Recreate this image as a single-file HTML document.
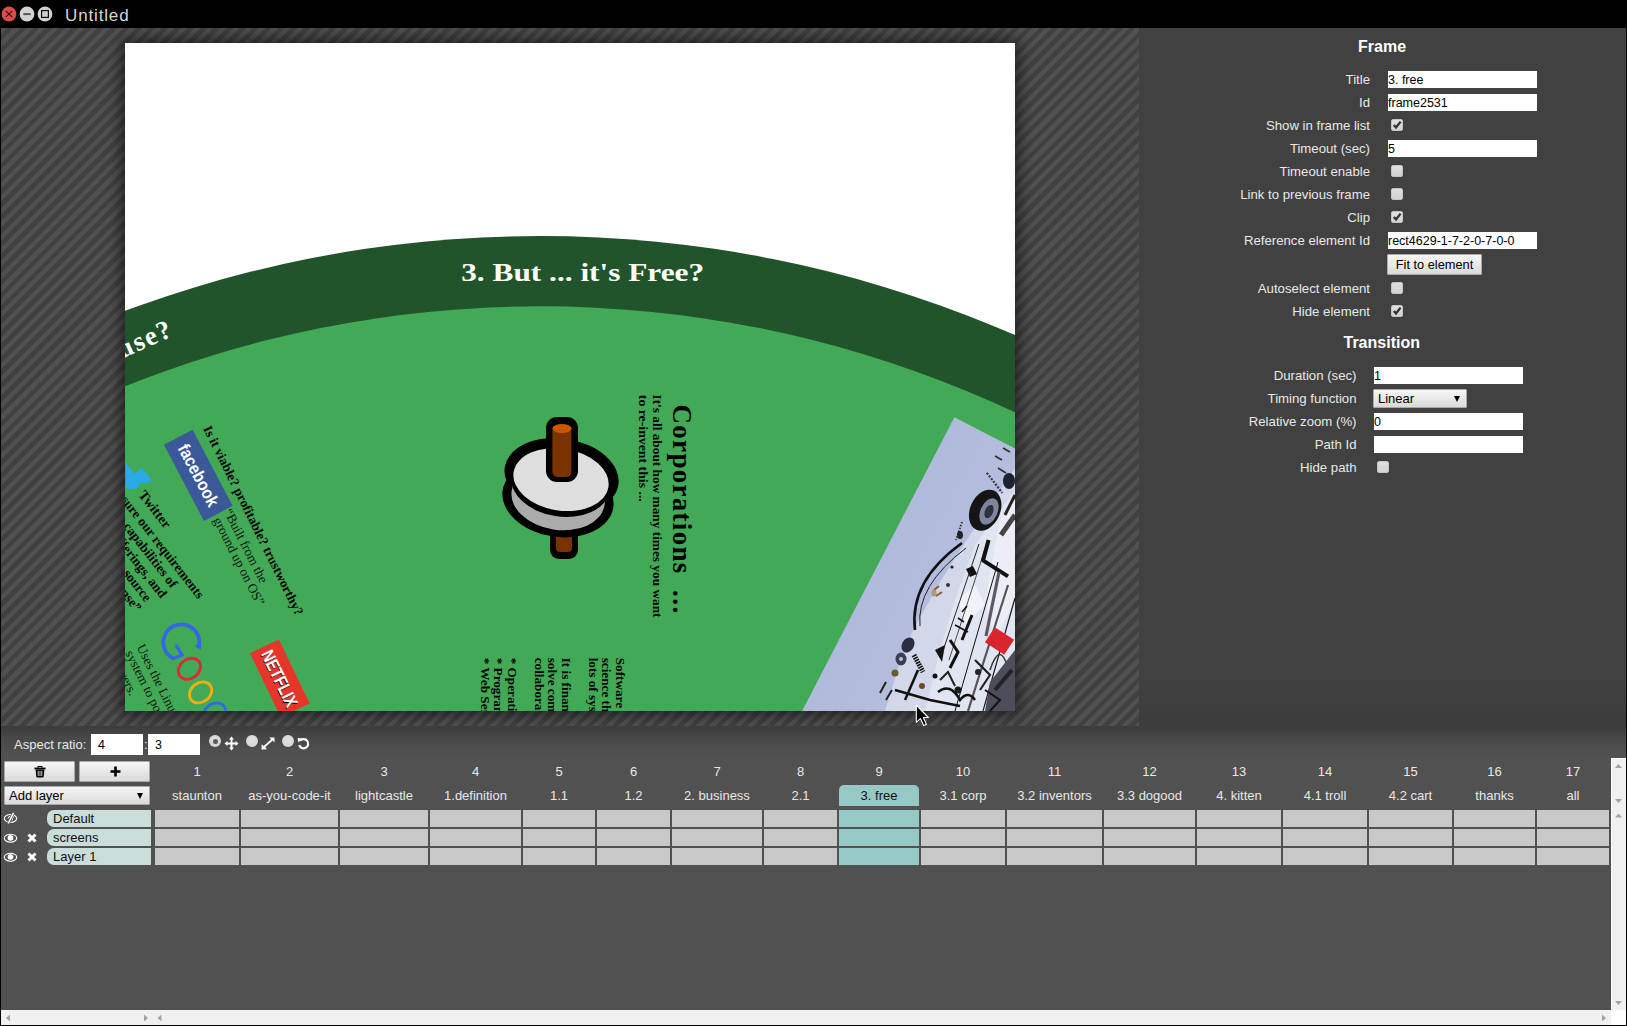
<!DOCTYPE html>
<html><head><meta charset="utf-8">
<style>
*{box-sizing:border-box;margin:0;padding:0}
html,body{width:1627px;height:1026px;overflow:hidden;background:#000;font-family:"Liberation Sans",sans-serif}
.abs{position:absolute}
#titlebar{left:0;top:0;width:1627px;height:28px;background:#000}
.wbtn{position:absolute;top:7px;width:15px;height:15px;border-radius:50%;background:#d4d4d4}
#ttl{position:absolute;left:65px;top:5.5px;font-size:17px;color:#d6d6d6;letter-spacing:0.85px}
#stage{left:1px;top:28px;width:1138px;height:698px;overflow:hidden;
 background:repeating-linear-gradient(135deg,#505050 0,#505050 4.4px,#414141 4.4px,#414141 9.12px)}
#canvas{left:124px;top:15px;width:890px;height:668px;background:#fff;overflow:hidden;box-shadow:0 0 14px 4px rgba(0,0,0,0.55)}
#panel{left:1139px;top:28px;width:487px;height:698px;background:linear-gradient(#414141 0,#414141 650px,#3c3c3c 698px);color:#e6e6e6}
#bottom{left:1px;top:726px;width:1625px;height:284px;background:linear-gradient(#3c3c3c 0,#474747 11px,#4f4f4f 24px,#515151 34px,#515151 100%)}
#hscroll{left:1px;top:1010px;width:1610px;height:15px;background:#f0f0f0}
#vscroll{left:1611px;top:758px;width:15px;height:252px;background:#f0f0f0;border-left:1px solid #fff;border-top:1px solid #fff}
#corner{left:1611px;top:1010px;width:15px;height:15px;background:#fff}
.lbl{position:absolute;font-size:13.2px;line-height:17px;color:#e8e8e8;text-align:right;white-space:nowrap}
.inp{position:absolute;height:17px;width:149px;background:#fff;color:#000;font-size:12.5px;line-height:19px;padding-left:0px;white-space:nowrap;overflow:hidden}
.chk{position:absolute;width:12px;height:12px;border-radius:2px;background:linear-gradient(#e0e0e0,#d2d2d2);border:1px solid #c4c4c4}
.tick{position:absolute;left:0px;top:0px}
.btn{position:absolute;background:linear-gradient(#f6f6f6,#dadada);border:1px solid #a9a9a9;border-radius:1px;color:#000;font-size:12.8px;line-height:19.5px;text-align:center;white-space:nowrap}
.sel{text-align:left;padding-left:4px;line-height:18.5px;font-size:13px}
.arr{position:absolute;right:6px;top:6px;width:0;height:0;border-left:3.5px solid transparent;border-right:3.5px solid transparent;border-top:6px solid #000}
.tl{position:absolute;font-size:13px;line-height:17px;color:#e8e8e8;white-space:nowrap}
.ainp{position:absolute;width:52px;height:21px;background:#fff;color:#000;font-size:12.5px;line-height:23px;padding-left:7px}
.radio{position:absolute;width:12px;height:12px;border-radius:50%;background:radial-gradient(circle at 50% 40%,#e2e2e2,#cfcfcf)}
.rdot{position:absolute;left:3.5px;top:3.5px;width:5px;height:5px;border-radius:50%;background:#5a5a5a}
.pill{position:absolute;left:47px;width:104px;height:17px;background:#c9dddb;border-radius:7px 0 0 7px;color:#111;font-size:13px;line-height:17px;padding-left:6px}
.gh{position:absolute;text-align:center;font-size:13px;line-height:17px;color:#e8e8e8;white-space:nowrap}
.gt{position:absolute;text-align:center;font-size:13px;line-height:17px;color:#e8e8e8;white-space:nowrap}
.tab{background:#96c8c6;color:#111;height:21px;line-height:21px;border-radius:5px 5px 0 0}
.cell{position:absolute;height:17px;background:#c8c8c8}
.csel{background:#96c8c6}
.hdr{position:absolute;font-size:16px;font-weight:bold;color:#fff}
</style></head><body>
<div id="titlebar" class="abs">
  <svg class="abs" style="left:0;top:0" width="60" height="28" viewBox="0 0 60 28">
    <circle cx="9" cy="14" r="7.4" fill="#df4a4a"/>
    <path d="M5.8 10.8 L12.2 17.2 M12.2 10.8 L5.8 17.2" stroke="#1a1a1a" stroke-width="1.1"/>
    <circle cx="27" cy="14" r="7.4" fill="#d2d2d2"/>
    <rect x="23.3" y="13.1" width="7.4" height="2" fill="#555"/>
    <circle cx="45" cy="14" r="7.4" fill="#d2d2d2"/>
    <rect x="41.6" y="10.6" width="6.8" height="6.8" fill="none" stroke="#111" stroke-width="1.2"/>
  </svg>
  <div id="ttl">Untitled</div>
</div>
<div id="stage" class="abs">
  <div id="canvas" class="abs">
<svg width="890" height="668" viewBox="125 43 890 668" style="position:absolute;left:0;top:0;font-family:'Liberation Serif',serif">
  <defs>
    <linearGradient id="pg" x1="0" y1="0" x2="1" y2="0">
      <stop offset="0" stop-color="#b0badb"/><stop offset="0.5" stop-color="#bcc3e0"/><stop offset="1" stop-color="#cfd3e8"/>
    </linearGradient>
  </defs>
  <circle cx="540" cy="1424" r="1188" fill="#21542a"/>
  <circle cx="540" cy="1424" r="1117.7" fill="#42aa56"/>
  <text x="582.7" y="281.4" text-anchor="middle" font-size="25.2" font-weight="bold" fill="#fff" textLength="243" lengthAdjust="spacingAndGlyphs">3. But ... it's Free?</text>
  <text transform="translate(175,335) rotate(-24)" text-anchor="end" letter-spacing="1.8" font-size="27" font-weight="bold" fill="#fff">Excuse?</text>
  <!-- wheel -->
  <g>
    <rect x="550" y="515" width="28" height="44" rx="9" fill="#000"/>
    <rect x="556" y="528" width="16" height="24" rx="4" fill="#7a3300"/>
    <g transform="rotate(9 560 486)">
    <ellipse cx="560" cy="476" rx="57.5" ry="37.5" fill="#000"/>
    <ellipse cx="560" cy="499" rx="56" ry="38" fill="#000"/>
    <ellipse cx="560" cy="498" rx="47" ry="32" fill="#ababab"/>
    <ellipse cx="560" cy="483.5" rx="49.5" ry="33" fill="#000"/>
    <ellipse cx="560" cy="479.5" rx="48" ry="31" fill="#dedede"/>
    </g>
    <rect x="546" y="417" width="32" height="65" rx="11" fill="#000"/>
    <rect x="552.4" y="425" width="19" height="52" rx="5" fill="#7a3300"/>
    <ellipse cx="562" cy="428.5" rx="9.5" ry="4.6" fill="#cc5500"/>
  </g>
  <!-- corporations -->
  <g font-weight="bold" fill="#000">
    <text transform="translate(672.5,404.5) rotate(90)" font-size="27" letter-spacing="1.3">Corporations</text><text transform="translate(672.5,590) rotate(90)" font-size="27" letter-spacing="1.5">...</text>
    <text transform="translate(653.2,394.5) rotate(90)" font-size="11.8" textLength="223" lengthAdjust="spacingAndGlyphs">It's all about how many times you want</text>
    <text transform="translate(639.3,394.8) rotate(90)" font-size="11.8" textLength="107" lengthAdjust="spacingAndGlyphs">to re-invent this ...</text>
  </g>
  <g font-weight="bold" fill="#000" font-size="13.2">
    <text transform="translate(615.8,657.7) rotate(90)">Software engineering is a</text>
    <text transform="translate(602.3,657.7) rotate(90)">science that requires</text>
    <text transform="translate(588.8,657.7) rotate(90)">lots of systems</text>
    <text transform="translate(561.8,657.7) rotate(90)">It is financially hard to</text>
    <text transform="translate(548.3,657.7) rotate(90)">solve complex</text>
    <text transform="translate(534.8,657.7) rotate(90)">collaboration</text>
    <text transform="translate(507.8,657.7) rotate(90)">* Operating Systems</text>
    <text transform="translate(494.3,657.7) rotate(90)">* Programming</text>
    <text transform="translate(480.8,657.7) rotate(90)">* Web Servers</text>
  </g>
  <!-- photo -->
  <g transform="translate(954.4,417.2) rotate(27.4)">
    <rect x="0" y="0" width="420" height="520" fill="url(#pg)"/>
  </g>
  <g id="parts">
    <path d="M968 538 L1015 468 L1015 711 L885 711 L900 662 L914 628 L940 582 Z" fill="#d3d7ea"/>
    <path d="M975 545 L1015 490 L1015 711 L925 711 L940 650 L955 600 Z" fill="#e1e4f1"/>
    <path d="M1000 520 L1015 500 L1015 600 L995 640 L985 600 Z" fill="#eceef7"/>
    <path d="M958 600 L975 585 L985 605 L965 625 Z" fill="#f2f3f9"/>
    <ellipse cx="985.2" cy="510.2" rx="15" ry="21.5" transform="rotate(24 985.2 510.2)" fill="#151515"/>
    <ellipse cx="989" cy="511.5" rx="8.5" ry="14" transform="rotate(24 989 511.5)" fill="#7d849c"/>
    <ellipse cx="989" cy="511.5" rx="4" ry="7" transform="rotate(24 989 511.5)" fill="#2c3040"/>
    <path d="M986.8 472.8 L1002.4 493" stroke="#333" stroke-width="2.2" stroke-dasharray="2 1.5"/>
    <ellipse cx="1009" cy="481" rx="6" ry="8" fill="#1e2230"/>
    <path d="M995 456 L1002 460 M998 468 L1006 473 M1003 448 L1010 452" stroke="#333" stroke-width="2"/>
    <path d="M962 522 L956 540" stroke="#333" stroke-width="2" stroke-dasharray="1.5 1.5"/>
    <ellipse cx="960" cy="535" rx="3" ry="4" fill="#222"/>
    <path d="M1005 515 L1015 495" stroke="#222" stroke-width="3"/>
    <path d="M1001 535 L1015 515" stroke="#444" stroke-width="5"/>
    <path d="M962 543 Q909 581 915 630" stroke="#111" stroke-width="2.6" fill="none"/>
    <path d="M966 548 Q916 586 920 626" stroke="#222" stroke-width="1" fill="none"/>
    <path d="M979 544 L943.6 649" stroke="#111" stroke-width="0.9"/>
    <path d="M985 549 L949 660" stroke="#222" stroke-width="0.8"/>
    <path d="M998 562 L955 711" stroke="#111" stroke-width="1"/>
    <path d="M1008 585 L968 711" stroke="#555" stroke-width="2.2"/>
    <path d="M1015 598 L983 711" stroke="#1a1a1a" stroke-width="1.2"/>
    <path d="M988.6 540 L983 560.4 L1008 576.4" stroke="#111" stroke-width="4" fill="none" stroke-linejoin="round"/>
    <path d="M986 636 L999 572" stroke="#5a5a64" stroke-width="3.2"/>
    <path d="M966 569 L973 566 L977 574 L970 577 Z" fill="#111"/>
    <path d="M962 612 L967 606 M958 618 L964 622 M955 625 L968 632" stroke="#111" stroke-width="1.6"/>
    <path d="M972 615 L962 640" stroke="#111" stroke-width="3"/>
    <circle cx="948" cy="585" r="2" fill="#333"/><circle cx="952" cy="567" r="1.6" fill="#222"/>
    <path d="M934 590 L939 586 M936 596 L942 592" stroke="#8a5a30" stroke-width="2"/>
    <ellipse cx="934" cy="593" rx="2.5" ry="3.5" fill="#b09a70"/>
    <path d="M1008 668 Q1000 640 990 670" stroke="#333" stroke-width="1.5" fill="none"/>
    <rect x="988" y="632" width="23" height="18" fill="#d9262e" transform="rotate(33 999.5 641)"/>
    <path d="M1015 650 L1015 711 L985 711 L990 682 Z" fill="#4c4e5c"/>
    <path d="M995 690 L1012 670" stroke="#222" stroke-width="4"/>
    <ellipse cx="908" cy="645" rx="6" ry="8" transform="rotate(30 908 645)" fill="#2a2e40"/>
    <ellipse cx="901" cy="659" rx="5.5" ry="6.5" fill="#3a3e54"/>
    <circle cx="901" cy="659" r="2" fill="#bcc0d8"/>
    <path d="M914 655 L923 672" stroke="#111" stroke-width="5" stroke-dasharray="1.6 1"/>
    <path d="M918 670 L905 700" stroke="#111" stroke-width="2.5"/>
    <circle cx="895" cy="673" r="3.5" fill="#6a5a30"/>
    <circle cx="922" cy="686" r="3" fill="#6b4a2a"/>
    <path d="M935 650 L945 645 L942 662 Z" fill="#151515"/>
    <path d="M950 640 L958 652 L950 668" stroke="#111" stroke-width="3" fill="none"/>
    <path d="M940 680 L948 672 L955 686" stroke="#222" stroke-width="2" fill="none"/>
    <path d="M895 690 L930 700 L960 706" stroke="#111" stroke-width="2.5" fill="none"/>
    <path d="M938 692 Q950 682 960 700 Q968 690 975 700" stroke="#111" stroke-width="2.5" fill="none"/>
    <path d="M880 693 L886 682 M886 700 L892 690" stroke="#222" stroke-width="2"/>
    <path d="M975 660 L990 675 L980 690" stroke="#222" stroke-width="2.2" fill="none"/>
    <circle cx="935" cy="676" r="2.5" fill="#111"/>
    <circle cx="978" cy="672" r="3" fill="#222"/>
    <circle cx="958" cy="690" r="3.5" fill="#1a1a1a"/>
    <path d="M985 690 L1000 700 L990 711" stroke="#111" stroke-width="2" fill="none"/>
  </g>
  <!-- left group -->
  <g transform="translate(192.6,429.7) rotate(62.27)">
    <rect width="86" height="32.4" fill="#3b5998"/>
    <text x="9" y="22" font-family="Liberation Sans" font-weight="bold" font-size="17.5" fill="#fff" textLength="68" lengthAdjust="spacingAndGlyphs">facebook</text>
  </g>
  <path d="M126 462 Q130 470 136 474 Q140 466 144 470 Q148 474 152 481 Q146 484 141 483 Q136 492 126 488 Z" fill="#29a9e6"/>
  <g font-weight="bold" fill="#000" font-size="13.3">
    <text transform="translate(138,495) rotate(52)" font-size="13.8">Twitter</text>
    <g transform="translate(198,599.5) rotate(52)" text-anchor="end">
      <text x="0" y="0">“We measure our requirements</text>
      <text x="-25" y="14.5">on the capabilities of</text>
      <text x="-23.5" y="29">the offerings, and</text>
      <text x="-30" y="43.5">open source</text>
      <text x="-28" y="57.5">license”</text>
    </g>
    <text transform="translate(203,428.5) rotate(63.7)">Is it viable?  profitable?  trustworthy?</text>
  </g>
  <g fill="#0d160d" font-size="13.3">
    <text transform="translate(223.5,511.5) rotate(63)">“Built from the</text>
    <text transform="translate(213,520) rotate(63)">ground up on OS”</text>
    <text transform="translate(136.5,647) rotate(63.5)">Uses the Linux operating</text>
    <text transform="translate(125,653) rotate(63.5)">system to power</text>
    <text transform="translate(104.5,645.5) rotate(63.5)">its servers.</text>
  </g>
  <!-- google -->
  <g fill="none">
    <path d="M198.5 648 A18 18 0 1 0 173.5 658.6" stroke="#3567e8" stroke-width="3.8"/>
    <path d="M195 646 L200.5 640 L201 650 Z" fill="#3567e8"/>
    <path d="M172 659 L182 655 L176 645" stroke="#3567e8" stroke-width="3.4" stroke-linejoin="miter"/>
    <ellipse cx="189.4" cy="668.8" rx="12" ry="9.6" transform="rotate(-38 189.4 668.8)" stroke="#e3263a" stroke-width="2.8"/>
    <ellipse cx="200.6" cy="692.4" rx="12" ry="9.6" transform="rotate(-38 200.6 692.4)" stroke="#f7ae10" stroke-width="2.8"/>
    <ellipse cx="214.5" cy="713.5" rx="12" ry="9.6" transform="rotate(-38 214.5 713.5)" stroke="#3567e8" stroke-width="2.8"/>
  </g>
  <g transform="translate(278.9,639.4) rotate(64.4)">
    <rect width="71" height="32" fill="#e8352a"/>
    <text x="5.5" y="23.5" font-family="Liberation Sans" font-weight="bold" font-size="18" fill="#000" textLength="61" lengthAdjust="spacingAndGlyphs">NETFLIX</text><text x="5" y="22.5" font-family="Liberation Sans" font-weight="bold" font-size="18" fill="#fff" textLength="61" lengthAdjust="spacingAndGlyphs">NETFLIX</text>
  </g>
</svg>

  </div>
</div>
<div id="panel" class="abs"></div>
<div id="panelc">
<div class="hdr" style="left:1358px;top:37.7px">Frame</div>
<div class="lbl" style="right:257px;top:71.0px">Title</div>
<div class="inp" style="left:1388px;top:71.0px">3. free</div>
<div class="lbl" style="right:257px;top:94.0px">Id</div>
<div class="inp" style="left:1388px;top:94.0px">frame2531</div>
<div class="lbl" style="right:257px;top:116.5px">Show in frame list</div>
<div class="chk" style="left:1391px;top:119.0px"><svg class="tick" width="10" height="10" viewBox="0 0 10 10"><path d="M1.8 5 L4 7.4 L8.6 1.6" stroke="#333" stroke-width="2.3" fill="none"/></svg></div>
<div class="lbl" style="right:257px;top:140.0px">Timeout (sec)</div>
<div class="inp" style="left:1388px;top:140.0px">5</div>
<div class="lbl" style="right:257px;top:162.5px">Timeout enable</div>
<div class="chk" style="left:1391px;top:165.0px"></div>
<div class="lbl" style="right:257px;top:185.5px">Link to previous frame</div>
<div class="chk" style="left:1391px;top:188.0px"></div>
<div class="lbl" style="right:257px;top:208.5px">Clip</div>
<div class="chk" style="left:1391px;top:211.0px"><svg class="tick" width="10" height="10" viewBox="0 0 10 10"><path d="M1.8 5 L4 7.4 L8.6 1.6" stroke="#333" stroke-width="2.3" fill="none"/></svg></div>
<div class="lbl" style="right:257px;top:232.0px">Reference element Id</div>
<div class="inp" style="left:1388px;top:232.0px">rect4629-1-7-2-0-7-0-0</div>
<div class="btn" style="left:1387px;top:254.0px;width:95px;height:21px">Fit to element</div>
<div class="lbl" style="right:257px;top:279.5px">Autoselect element</div>
<div class="chk" style="left:1391px;top:282.0px"></div>
<div class="lbl" style="right:257px;top:302.5px">Hide element</div>
<div class="chk" style="left:1391px;top:305.0px"><svg class="tick" width="10" height="10" viewBox="0 0 10 10"><path d="M1.8 5 L4 7.4 L8.6 1.6" stroke="#333" stroke-width="2.3" fill="none"/></svg></div>
<div class="hdr" style="left:1343.5px;top:333.9px">Transition</div>
<div class="lbl" style="right:270.5px;top:367.0px">Duration (sec)</div>
<div class="inp" style="left:1374px;top:367.0px">1</div>
<div class="lbl" style="right:270.5px;top:390.0px">Timing function</div>
<div class="btn sel" style="left:1373px;top:389.0px;width:94px;height:19px">Linear<span class="arr"></span></div>
<div class="lbl" style="right:270.5px;top:413.0px">Relative zoom (%)</div>
<div class="inp" style="left:1374px;top:413.0px">0</div>
<div class="lbl" style="right:270.5px;top:436.0px">Path Id</div>
<div class="inp" style="left:1374px;top:436.0px"></div>
<div class="lbl" style="right:270.5px;top:458.5px">Hide path</div>
<div class="chk" style="left:1377px;top:461.0px"></div>
</div>
<div id="bottom" class="abs"></div>
<div id="bottomc">
<div class="tl" style="left:14px;top:736px">Aspect ratio:</div>
<div class="ainp" style="left:91px;top:734px">4</div>
<div class="tl" style="left:144px;top:736px">:</div>
<div class="ainp" style="left:148px;top:734px">3</div>
<div class="radio" style="left:209px;top:735px"><div class="rdot"></div></div>
<svg class="abs" style="left:224px;top:736px" width="15" height="15" viewBox="0 0 15 15"><path d="M7.5 0.5 L10 3.5 H8.5 V6.5 H11.5 V5 L14.5 7.5 L11.5 10 V8.5 H8.5 V11.5 H10 L7.5 14.5 L5 11.5 H6.5 V8.5 H3.5 V10 L0.5 7.5 L3.5 5 V6.5 H6.5 V3.5 H5 Z" fill="#fff"/></svg>
<div class="radio" style="left:246px;top:735px"></div>
<svg class="abs" style="left:261px;top:737px" width="14" height="13" viewBox="0 0 14 13"><path d="M13.5 0.5 L13.5 5.5 L11.6 3.6 L4.2 10.2 L6 12.3 L0.5 12.5 L0.7 7.2 L2.6 9 L10 2.4 L8.4 0.6 Z" fill="#fff"/></svg>
<div class="radio" style="left:282px;top:735px"></div>
<svg class="abs" style="left:297px;top:737px" width="13" height="13" viewBox="0 0 13 13"><path d="M3.2 3.6 A4.6 4.6 0 1 1 2.2 8.2" stroke="#fff" stroke-width="2.1" fill="none"/><path d="M0.6 1 L5.4 1.4 L1.4 5.6 Z" fill="#fff"/></svg>
<div class="btn" style="left:4px;top:761px;width:71px;height:21px"><svg style="position:absolute;left:29px;top:4px" width="12" height="12" viewBox="0 0 12 12"><path d="M3.8 1.6 Q3.8 0.4 5 0.4 H7 Q8.2 0.4 8.2 1.6" stroke="#000" stroke-width="1.2" fill="none"/><rect x="0.5" y="1.6" width="11" height="1.8" fill="#000"/><path d="M1.6 3.4 H10.4 L9.8 10.6 Q9.7 11.6 8.7 11.6 H3.3 Q2.3 11.6 2.2 10.6 Z" fill="#000"/><path d="M4.2 4.8 V10 M6 4.8 V10 M7.8 4.8 V10" stroke="#e0e0e0" stroke-width="0.9"/></svg></div>
<div class="btn" style="left:79px;top:761px;width:71px;height:21px"><svg style="position:absolute;left:30px;top:4px" width="11" height="11" viewBox="0 0 11 11"><path d="M5.5 0.5 V10.5 M0.5 5.5 H10.5" stroke="#000" stroke-width="2.6"/></svg></div>
<div class="btn sel" style="left:4px;top:786px;width:146px;height:19px;font-size:13px;padding-left:4px;line-height:18px">Add layer<span class="arr" style="right:6px;top:6px"></span></div>
<svg class="abs" style="left:3px;top:812px" width="16" height="13" viewBox="0 0 16 13"><ellipse cx="7.5" cy="6.5" rx="6.2" ry="4" stroke="#fff" stroke-width="1.1" fill="none"/><path d="M5 6.5 Q5.5 4 8 4" stroke="#fff" stroke-width="1" fill="none"/><path d="M11 2.5 Q10 6 8.8 8.5" stroke="#fff" stroke-width="1" fill="none"/><path d="M10.5 0.8 L5.2 11.5" stroke="#515151" stroke-width="3"/><path d="M10.5 0.8 L5.2 11.5" stroke="#fff" stroke-width="1.6"/></svg>
<svg class="abs" style="left:3px;top:832px" width="16" height="13" viewBox="0 0 16 13"><ellipse cx="7.5" cy="6.2" rx="6.2" ry="4" stroke="#fff" stroke-width="1.1" fill="none"/><circle cx="7.5" cy="5.8" r="2.9" fill="#fff"/></svg>
<svg class="abs" style="left:3px;top:851px" width="16" height="13" viewBox="0 0 16 13"><ellipse cx="7.5" cy="6.2" rx="6.2" ry="4" stroke="#fff" stroke-width="1.1" fill="none"/><circle cx="7.5" cy="5.8" r="2.9" fill="#fff"/></svg>
<svg class="abs" style="left:27px;top:833px" width="10" height="10" viewBox="0 0 10 10"><path d="M1.5 1.5 L8.5 8.5 M8.5 1.5 L1.5 8.5" stroke="#fff" stroke-width="3"/></svg>
<svg class="abs" style="left:27px;top:852px" width="10" height="10" viewBox="0 0 10 10"><path d="M1.5 1.5 L8.5 8.5 M8.5 1.5 L1.5 8.5" stroke="#fff" stroke-width="3"/></svg>
<div class="pill" style="top:810px">Default</div>
<div class="pill" style="top:829px">screens</div>
<div class="pill" style="top:848px">Layer 1</div>
<div class="gh" style="left:155px;top:763px;width:84px">1</div>
<div class="gt" style="left:155px;top:787px;width:84px">staunton</div>
<div class="cell" style="left:155px;top:810px;width:84px"></div>
<div class="cell" style="left:155px;top:829px;width:84px"></div>
<div class="cell" style="left:155px;top:848px;width:84px"></div>
<div class="gh" style="left:241px;top:763px;width:97px">2</div>
<div class="gt" style="left:241px;top:787px;width:97px">as-you-code-it</div>
<div class="cell" style="left:241px;top:810px;width:97px"></div>
<div class="cell" style="left:241px;top:829px;width:97px"></div>
<div class="cell" style="left:241px;top:848px;width:97px"></div>
<div class="gh" style="left:340px;top:763px;width:88px">3</div>
<div class="gt" style="left:340px;top:787px;width:88px">lightcastle</div>
<div class="cell" style="left:340px;top:810px;width:88px"></div>
<div class="cell" style="left:340px;top:829px;width:88px"></div>
<div class="cell" style="left:340px;top:848px;width:88px"></div>
<div class="gh" style="left:430px;top:763px;width:91px">4</div>
<div class="gt" style="left:430px;top:787px;width:91px">1.definition</div>
<div class="cell" style="left:430px;top:810px;width:91px"></div>
<div class="cell" style="left:430px;top:829px;width:91px"></div>
<div class="cell" style="left:430px;top:848px;width:91px"></div>
<div class="gh" style="left:523px;top:763px;width:72px">5</div>
<div class="gt" style="left:523px;top:787px;width:72px">1.1</div>
<div class="cell" style="left:523px;top:810px;width:72px"></div>
<div class="cell" style="left:523px;top:829px;width:72px"></div>
<div class="cell" style="left:523px;top:848px;width:72px"></div>
<div class="gh" style="left:597px;top:763px;width:73px">6</div>
<div class="gt" style="left:597px;top:787px;width:73px">1.2</div>
<div class="cell" style="left:597px;top:810px;width:73px"></div>
<div class="cell" style="left:597px;top:829px;width:73px"></div>
<div class="cell" style="left:597px;top:848px;width:73px"></div>
<div class="gh" style="left:672px;top:763px;width:90px">7</div>
<div class="gt" style="left:672px;top:787px;width:90px">2. business</div>
<div class="cell" style="left:672px;top:810px;width:90px"></div>
<div class="cell" style="left:672px;top:829px;width:90px"></div>
<div class="cell" style="left:672px;top:848px;width:90px"></div>
<div class="gh" style="left:764px;top:763px;width:73px">8</div>
<div class="gt" style="left:764px;top:787px;width:73px">2.1</div>
<div class="cell" style="left:764px;top:810px;width:73px"></div>
<div class="cell" style="left:764px;top:829px;width:73px"></div>
<div class="cell" style="left:764px;top:848px;width:73px"></div>
<div class="gh" style="left:839px;top:763px;width:80px">9</div>
<div class="gt tab" style="left:839px;top:785px;width:80px">3. free</div>
<div class="cell csel" style="left:839px;top:810px;width:80px"></div>
<div class="cell csel" style="left:839px;top:829px;width:80px"></div>
<div class="cell csel" style="left:839px;top:848px;width:80px"></div>
<div class="gh" style="left:921px;top:763px;width:84px">10</div>
<div class="gt" style="left:921px;top:787px;width:84px">3.1 corp</div>
<div class="cell" style="left:921px;top:810px;width:84px"></div>
<div class="cell" style="left:921px;top:829px;width:84px"></div>
<div class="cell" style="left:921px;top:848px;width:84px"></div>
<div class="gh" style="left:1007px;top:763px;width:95px">11</div>
<div class="gt" style="left:1007px;top:787px;width:95px">3.2 inventors</div>
<div class="cell" style="left:1007px;top:810px;width:95px"></div>
<div class="cell" style="left:1007px;top:829px;width:95px"></div>
<div class="cell" style="left:1007px;top:848px;width:95px"></div>
<div class="gh" style="left:1104px;top:763px;width:91px">12</div>
<div class="gt" style="left:1104px;top:787px;width:91px">3.3 dogood</div>
<div class="cell" style="left:1104px;top:810px;width:91px"></div>
<div class="cell" style="left:1104px;top:829px;width:91px"></div>
<div class="cell" style="left:1104px;top:848px;width:91px"></div>
<div class="gh" style="left:1197px;top:763px;width:84px">13</div>
<div class="gt" style="left:1197px;top:787px;width:84px">4. kitten</div>
<div class="cell" style="left:1197px;top:810px;width:84px"></div>
<div class="cell" style="left:1197px;top:829px;width:84px"></div>
<div class="cell" style="left:1197px;top:848px;width:84px"></div>
<div class="gh" style="left:1283px;top:763px;width:84px">14</div>
<div class="gt" style="left:1283px;top:787px;width:84px">4.1 troll</div>
<div class="cell" style="left:1283px;top:810px;width:84px"></div>
<div class="cell" style="left:1283px;top:829px;width:84px"></div>
<div class="cell" style="left:1283px;top:848px;width:84px"></div>
<div class="gh" style="left:1369px;top:763px;width:83px">15</div>
<div class="gt" style="left:1369px;top:787px;width:83px">4.2 cart</div>
<div class="cell" style="left:1369px;top:810px;width:83px"></div>
<div class="cell" style="left:1369px;top:829px;width:83px"></div>
<div class="cell" style="left:1369px;top:848px;width:83px"></div>
<div class="gh" style="left:1454px;top:763px;width:81px">16</div>
<div class="gt" style="left:1454px;top:787px;width:81px">thanks</div>
<div class="cell" style="left:1454px;top:810px;width:81px"></div>
<div class="cell" style="left:1454px;top:829px;width:81px"></div>
<div class="cell" style="left:1454px;top:848px;width:81px"></div>
<div class="gh" style="left:1537px;top:763px;width:72px">17</div>
<div class="gt" style="left:1537px;top:787px;width:72px">all</div>
<div class="cell" style="left:1537px;top:810px;width:72px"></div>
<div class="cell" style="left:1537px;top:829px;width:72px"></div>
<div class="cell" style="left:1537px;top:848px;width:72px"></div>
</div>
<div id="hscroll" class="abs"></div>
<div id="vscroll" class="abs"></div>
<div id="corner" class="abs"></div>
<svg class="abs" style="left:0;top:1010px" width="1627" height="16">
  <path d="M6 8 L10 4.5 L10 11.5 Z" fill="#a3a3a3"/>
  <path d="M148 8 L144 4.5 L144 11.5 Z" fill="#a3a3a3"/>
  <path d="M157.5 8 L161.5 4.5 L161.5 11.5 Z" fill="#a3a3a3"/>
  <path d="M1606 8 L1602 4.5 L1602 11.5 Z" fill="#a3a3a3"/>
</svg>
<svg class="abs" style="left:1611px;top:758px" width="15" height="252">
  <path d="M7.5 6 L11 10 L4 10 Z" fill="#a3a3a3"/>
  <path d="M7.5 45 L11 41 L4 41 Z" fill="#a3a3a3"/>
  <path d="M7.5 55.5 L11 59.5 L4 59.5 Z" fill="#a3a3a3"/>
  <path d="M7.5 247 L11 243 L4 243 Z" fill="#a3a3a3"/>
</svg>
<svg class="abs" style="left:915px;top:703.5px" width="16" height="24" viewBox="0 0 16 24"><path d="M1.3 1 L1.3 18.3 L5.4 14.6 L8.7 21.6 L11.5 20.4 L8.3 13.5 L13.3 13.5 Z" fill="#000" stroke="#fff" stroke-width="1.1" stroke-linejoin="round"/></svg>
</body></html>
